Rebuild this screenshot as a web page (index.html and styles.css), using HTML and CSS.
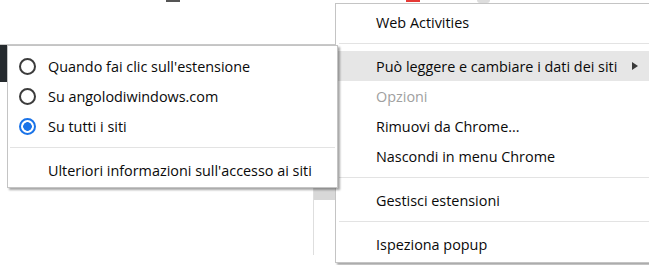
FILE: index.html
```html
<!DOCTYPE html>
<html lang="it">
<head>
<meta charset="utf-8">
<title>Menu estensione</title>
<link rel="stylesheet" href="styles.css">
</head>
<body>
<div class="stage">
  <div class="toolbar">
    <span class="tb-mark tb-dark"></span>
    <span class="tb-mark tb-red"></span>
    <span class="tb-mark tb-gray"></span>
  </div>
  <div class="page-body">
    <div class="dark-strip"></div>
    <div class="spacer"></div>
    <div class="panel-col"><div class="dots"></div></div>
  </div>

  <div class="menu menu-main">
    <div class="item">Web Activities</div>
    <div class="sep"></div>
    <div class="item hover">Può leggere e cambiare i dati dei siti<span class="arrow"></span></div>
    <div class="item disabled">Opzioni</div>
    <div class="item">Rimuovi da Chrome...</div>
    <div class="item">Nascondi in menu Chrome</div>
    <div class="sep"></div>
    <div class="item">Gestisci estensioni</div>
    <div class="sep"></div>
    <div class="item">Ispeziona popup</div>
  </div>

  <div class="menu menu-sub">
    <div class="item"><span class="radio"></span>Quando fai clic sull'estensione</div>
    <div class="item"><span class="radio"></span>Su angolodiwindows.com</div>
    <div class="item"><span class="radio checked"></span>Su tutti i siti</div>
    <div class="sep"></div>
    <div class="item plain">Ulteriori informazioni sull'accesso ai siti</div>
  </div>
</div>
</body>
</html>
```
FILE: styles.css
```css
* { box-sizing: border-box; }
html, body { margin: 0; padding: 0; background: #fff; }
body { font-family: "Open Sans", "Noto Sans", sans-serif; font-size: 14.4px; color: #0a0a0a; }

.stage { position: relative; width: 649px; height: 265px; overflow: hidden; background: #fff; }

.toolbar { position: relative; height: 45px; border-bottom: 1px solid #c8c8c8; }
.tb-mark { position: absolute; top: 0; height: 2px; }
.tb-dark { left: 166px; width: 14px; background: #555; }
.tb-red { left: 406px; width: 14px; background: #e53935; }
.tb-gray { left: 477px; width: 13px; height: 3px; background: #ddd; border-radius: 0 0 6px 6px; }

.page-body { display: flex; align-items: flex-start; }
.dark-strip { width: 7px; height: 37px; background: #252a2e; }
.spacer { width: 306px; }
.panel-col { width: 22px; height: 67px; margin-top: 143px; border-left: 1px solid #dedede; }
.dots { height: 12px; background-image: radial-gradient(#d8d8d8 0.8px, transparent 0.9px); background-size: 2px 2px; }

.menu { position: absolute; background: #fff; border: 1px solid #c4c4c4; box-shadow: 2px 2px 2px rgba(0,0,0,0.35); }
.menu-main { left: 335px; top: 3px; width: 330px; height: 260px; padding: 3px 0; }
.menu-sub { left: 7px; top: 45px; width: 331px; height: 143px; padding: 5px 0 3px; }

.item { position: relative; height: 30px; display: flex; align-items: center; white-space: nowrap; }
.menu-main .item { padding-left: 40px; }
.menu-sub .item { padding-left: 11px; }
.menu-sub .item.plain { padding-left: 40px; }
.item.hover { background: #e6e6e6; }
.item.disabled { color: #a0a0a0; }

.sep { height: 1px; background: #e3e3e3; margin: 6px 0 7px 3px; }
.menu-sub .sep { margin: 6px 2px 7px 2px; }

.arrow { position: absolute; left: 296px; top: 11px; width: 0; height: 0; border-left: 6px solid #3a3a3a; border-top: 4px solid transparent; border-bottom: 4px solid transparent; }

.radio { width: 17px; height: 17px; border: 2px solid #3c3c3c; border-radius: 50%; margin-right: 12px; flex: none; }
.radio.checked { border-color: #1a73e8; background: radial-gradient(circle, #1a73e8 0 4px, #fff 4.6px); }
```
